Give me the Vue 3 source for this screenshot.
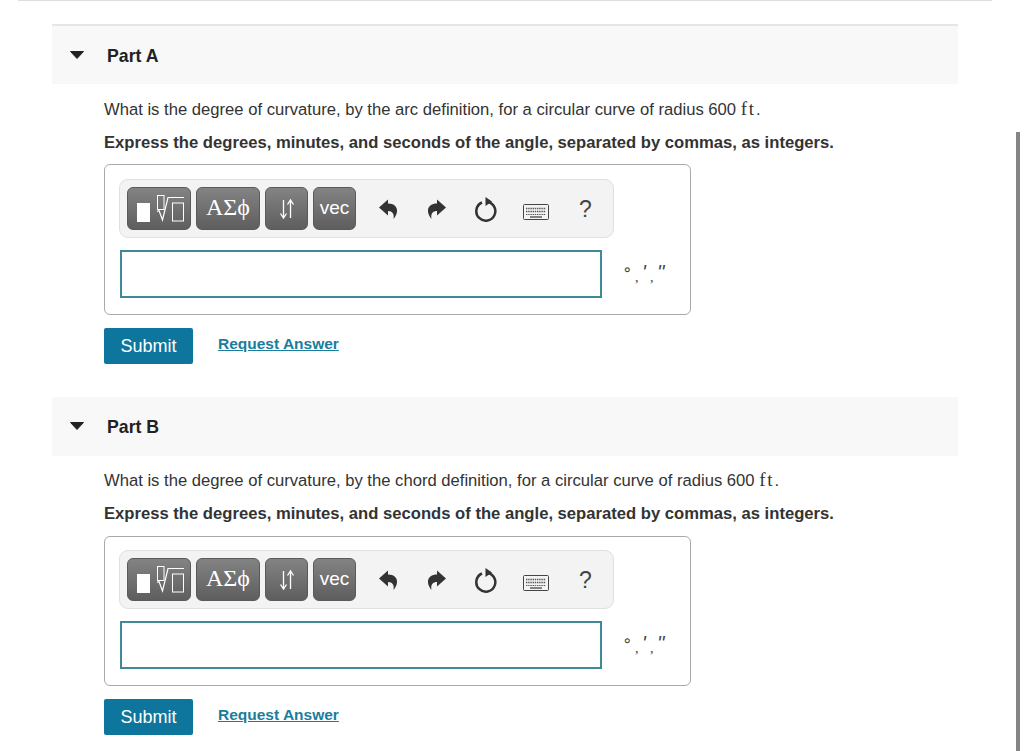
<script setup>
const parts = [
  { name: 'Part A', def: 'arc' },
  { name: 'Part B', def: 'chord' }
]
</script>

<template>
  <div class="page">
    <div class="rule"></div>
    <div class="scrollbar"></div>
    <section v-for="(p, i) in parts" :key="p.name" class="part" :class="i === 0 ? 'first' : 'second'">
      <header class="head">
        <svg class="caret" width="14" height="8" viewBox="0 0 14 8"><path d="M0.500 0.500H13.500L7 7.500Z" fill="#222" stroke="#222" stroke-linejoin="round" /></svg>
        <span class="title">{{ p.name }}</span>
      </header>
      <div class="body">
        <p class="q">What is the degree of curvature, by the {{ p.def }} definition, for a circular curve of radius 600 <span class="unit">ft</span>.</p>
        <p class="hint">Express the degrees, minutes, and seconds of the angle, separated by commas, as integers.</p>
        <div class="box">
          <div class="toolbar">
            <div class="btn b1">
              <svg width="62" height="41" viewBox="1 1 62 41">
                <rect x="10" y="16" width="13" height="19" fill="#fff" />
                <rect x="30.500" y="8.500" width="6.500" height="14" fill="none" stroke="#fff" />
                <path d="M30 24.500l2-1 3.500 9.500 5.500-22.500H57" fill="none" stroke="#fff" stroke-width="1.200" />
                <rect x="45.500" y="16" width="11" height="18" fill="none" stroke="#fff" />
              </svg>
            </div>
            <div class="btn b2 greek">ΑΣϕ</div>
            <div class="btn b3">
              <svg width="18" height="22" viewBox="0 0 18 22" fill="none" stroke="#fff" stroke-width="1.300">
                <path d="M5.500 2V20M2.500 15.500L5.500 20L8.500 15.500" />
                <path d="M12.500 20V2M9.500 6.500L12.500 2L15.500 6.500" />
              </svg>
            </div>
            <div class="btn b4">vec</div>
            <div class="tools">
              <svg class="t undo" width="19" height="21" viewBox="0 0 19 21"><path d="M0 8.500L9 0.500V4.500C15 4.500 18.500 8 18 12.500C17.800 15 16.500 17.500 14.500 20C15.500 15 13.500 12 9 12V16.500Z" fill="#333" /></svg>
              <svg class="t redo" width="19" height="21" viewBox="0 0 19 21"><path d="M18 8.500L9 0.500V4.500C3 4.500 -0.500 8 0 12.500C0.200 15 1.500 17.500 3.500 20C2.500 15 4.500 12 9 12V16.500Z" fill="#333" /></svg>
              <svg class="t reset" width="24" height="26" viewBox="0 0 24 26"><path d="M8 6.500A9.500 9.500 0 1 0 12 5.700" fill="none" stroke="#333" stroke-width="2.500" /><path d="M11.500 1L18 5.500L11.500 10Z" fill="#333" /></svg>
              <svg class="t kbd" width="26" height="16" viewBox="0 0 26 16">
                <rect x="0.500" y="0.500" width="25" height="15" rx="1" fill="#f3f3f3" stroke="#444" />
                <path d="M3 4.500H23M3 7.500H23" stroke="#555" stroke-width="1.600" stroke-dasharray="1.400 .8" />
                <path d="M3 10.500H23" stroke="#555" stroke-width="1.200" stroke-dasharray="1.400 .8" />
                <path d="M7 13H19" stroke="#444" stroke-width="1.300" />
              </svg>
              <span class="t help">?</span>
            </div>
          </div>
          <div class="answer">
            <div class="input"></div>
            <div class="units"><span class="deg">∘</span><i class="c">,</i><span class="it">'</span><i class="c">,</i><span class="it">''</span></div>
          </div>
        </div>
        <div class="actions">
          <button class="submit" type="button">Submit</button>
          <a class="req">Request Answer</a>
        </div>
      </div>
    </section>
  </div>
</template>

<style>
html, body { margin: 0; background: #fff; overflow: hidden; }
</style>

<style scoped>
.page {
  position: relative;
  height: 751px;
  overflow: hidden;
  background: #fff;
  font-family: "Liberation Sans", Arial, sans-serif;
  color: #333;
}
.rule { height: 1px; margin: 0 32px 0 18px; background: #dedede; }
.scrollbar {
  position: absolute;
  left: 1016px;
  top: 132px;
  width: 4px;
  bottom: 0;
  background: #858585;
}
.part { margin: 0 66px 0 52px; }
.first { padding-top: 23px; }
.second { padding-top: 33px; }
.head {
  display: flex;
  align-items: center;
  background: #f8f8f8;
  box-sizing: border-box;
}
.first .head { border-top: 2px solid #e6e6e6; height: 60px; }
.second .head { height: 59px; }
.first .q { margin-top: 15px; }
.second .q { margin-top: 14px; }
.caret { margin-left: 18px; margin-top: -2px; }
.first .caret { margin-top: 0; }
.title { margin-left: 23px; margin-top: 2px; font-size: 17.700px; font-weight: 700; color: #222; }
.body { padding-left: 52px; }
.q { margin: 0; font-size: 16.640px; line-height: 20px; color: #333; white-space: nowrap; }
.unit { font-family: "Liberation Serif", serif; letter-spacing: 1.800px; font-size: 19px; }
.hint { margin: 13px 0 0; font-size: 16.640px; line-height: 20px; font-weight: 700; color: #333; white-space: nowrap; }
.box {
  box-sizing: border-box;
  width: 587px;
  height: 151px;
  margin-top: 11px;
  padding: 14px 14px 0;
  border: 1px solid #a9a9a9;
  border-radius: 6px;
}
.second .box { height: 150px; margin-top: 12px; padding-top: 13px; }
.toolbar {
  box-sizing: border-box;
  display: flex;
  align-items: center;
  gap: 5px;
  width: 495px;
  height: 59px;
  padding: 0 7px;
  background: #f3f3f3;
  border: 1px solid #e0e0e0;
  border-radius: 9px;
}
.btn {
  box-sizing: border-box;
  display: flex;
  align-items: center;
  justify-content: center;
  height: 43px;
  color: #fff;
  background: linear-gradient(#838383, #5e5e5e);
  border: 1px solid #5a5a5a;
  border-radius: 6px;
}
.b1 { width: 64px; }
.b2 { width: 64px; }
.b3 { width: 43px; }
.b4 { width: 43px; font-size: 19px; padding-bottom: 2px; }
.greek { font-family: "Liberation Serif", serif; font-size: 24px; padding-bottom: 2px; }
.tools { flex: 1; height: 100%; display: flex; align-items: center; padding-left: 18px; }
.t { display: block; flex: none; }
.undo { margin-top: 2px; }
.redo { margin-left: 30px; margin-top: 2px; }
.reset { margin-left: 27px; margin-top: 0; }
.kbd { margin-left: 25px; margin-top: 7px; }
.help { margin-left: 30px; margin-top: 2px; font-size: 23px; color: #444; }
.answer { display: flex; margin-top: 12px; }
.input {
  box-sizing: border-box;
  width: 482px;
  height: 48px;
  margin-left: 1px;
  border: 2px solid #3f8a98;
  background: #fff;
}
.units {
  display: flex;
  align-items: flex-start;
  margin-left: 20px;
  padding-top: 13px;
  font-size: 20px;
  color: #444;
  line-height: 18px;
}
.deg { width: 13px; margin-top: -2px; font-family: "DejaVu Sans", sans-serif; font-size: 16px; }
.it { font-style: italic; width: 8px; white-space: nowrap; }
.c { font-style: normal; font-size: 14px; margin-top: 6px; width: 7px; font-family: "Liberation Serif", serif; }
.actions { display: flex; align-items: center; margin-top: 13px; height: 36px; }
.submit {
  box-sizing: border-box;
  width: 89px;
  height: 36px;
  border: 0;
  padding: 0;
  border-radius: 2px;
  background: #0e769c;
  color: #fff;
  font: 18px "Liberation Sans", Arial, sans-serif;
}
.req {
  margin: 0 0 5px 25px;
  font-size: 15.500px;
  font-weight: 700;
  color: #1a7d9c;
  text-decoration: underline;
}
</style>
